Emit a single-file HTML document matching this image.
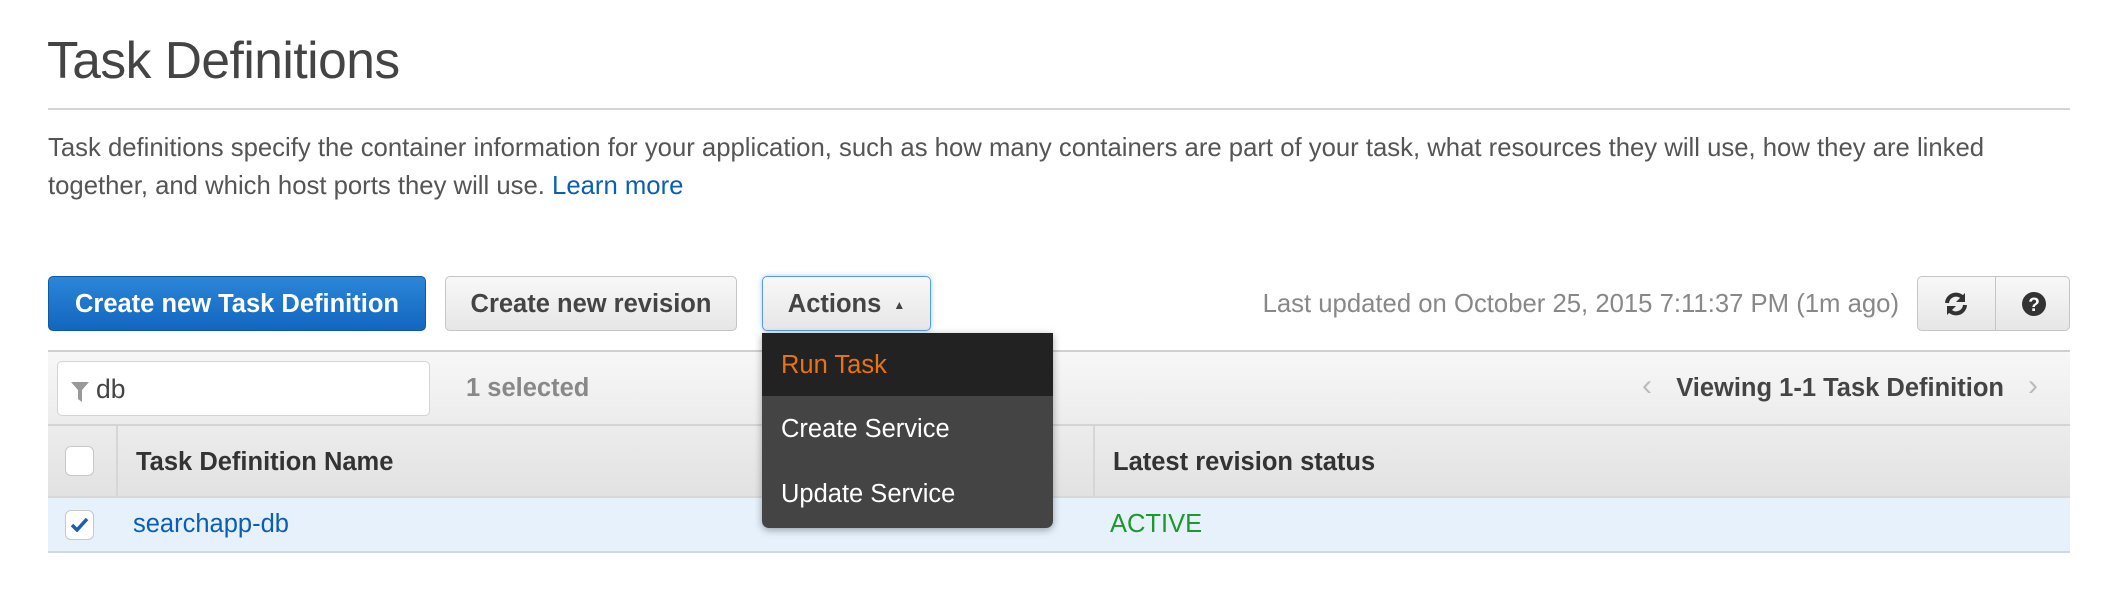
<!DOCTYPE html>
<html><head><meta charset="utf-8"><style>
*{box-sizing:border-box;margin:0;padding:0}
body{width:2112px;height:596px;background:#fff;font-family:"Liberation Sans",Arial,sans-serif;position:relative;overflow:hidden;color:#444}
.a{position:absolute;white-space:nowrap}
h1{position:absolute;left:47px;top:30px;font-size:51.5px;font-weight:normal;color:#444;letter-spacing:-0.5px}
.hr{position:absolute;left:48px;top:108px;width:2022px;height:2px;background:#d5d5d5}
.p{position:absolute;left:48px;top:129px;width:2060px;font-size:25.7px;line-height:38px;color:#555}
.p a{color:#0a5fb4;text-decoration:none}
.btn{position:absolute;top:276px;height:55px;border-radius:5px;font-weight:bold;font-size:25.5px;display:flex;align-items:center;justify-content:center;padding-top:2px}
.b1{left:48px;width:378px;background:linear-gradient(#2b86d8,#1266bf);border:1px solid #0e5aa8;color:#fff}
.b2{left:445px;width:292px;background:linear-gradient(#f8f8f8,#e6e6e6);border:1px solid #c5c5c5;color:#444}
.b3{left:762px;width:169px;background:linear-gradient(#f8f8f8,#e6e6e6);border:1px solid #5a9be0;color:#444;box-shadow:0 0 6px #a8cdf3}
.grp{position:absolute;left:1917px;top:276px;width:153px;height:55px;border:1px solid #c5c5c5;border-radius:5px;background:linear-gradient(#f8f8f8,#e6e6e6)}
.grp .d{position:absolute;left:77px;top:0;width:1px;height:53px;background:#c5c5c5}
.panel{position:absolute;left:48px;top:350px;width:2022px;height:201px;border-top:2px solid #d0d0d0}
.bar{position:absolute;left:0;top:0;width:100%;height:74px;background:linear-gradient(#f7f7f7,#ececec);border-bottom:2px solid #d4d4d4}
.inp{position:absolute;left:9px;top:9px;width:373px;height:55px;background:#fff;border:1px solid #d4d4d4;border-radius:5px}
.hd{position:absolute;left:0;top:74px;width:100%;height:72px;background:linear-gradient(#ececec,#e2e2e2);border-bottom:2px solid #d8d8d8}
.row{position:absolute;left:0;top:146px;width:100%;height:55px;background:#e6f1fc;border-bottom:2px solid #cfd9e2}
.cb{position:absolute;width:29px;height:30px;border:1px solid #c8c8c8;border-radius:6px;background:#fff}
.menu{position:absolute;left:762px;top:333px;width:291px;height:195px;background:#444;border-radius:0 0 7px 7px;box-shadow:0 2px 8px rgba(0,0,0,.35);overflow:hidden}
.menu div{position:absolute;left:19px;font-size:25.5px;color:#fff}
</style></head><body>
<h1>Task Definitions</h1>
<div class="hr"></div>
<div class="p">Task definitions specify the container information for your application, such as how many containers are part of your task, what resources they will use, how they are linked<br>together, and which host ports they will use. <a>Learn more</a></div>

<div class="btn b1">Create new Task Definition</div>
<div class="btn b2">Create new revision</div>
<div class="btn b3">Actions <span style="font-size:12px;margin-left:12px">&#9650;</span></div>
<div class="a" style="right:213px;top:290px;font-size:25.7px;color:#888">Last updated on October 25, 2015 7:11:37 PM (1m ago)</div>
<div class="grp"><div class="d"></div>
<svg class="a" style="left:25px;top:14px" width="26" height="26" viewBox="0 0 26 26"><path d="M4 12a9 9 0 0 1 16-5" fill="none" stroke="#333" stroke-width="4"/><path d="M22 2v9h-9z" fill="#333"/><path d="M22 14a9 9 0 0 1-16 5" fill="none" stroke="#333" stroke-width="4"/><path d="M4 24v-9h9z" fill="#333"/></svg>
<svg class="a" style="left:103px;top:14px" width="26" height="26" viewBox="0 0 26 26"><circle cx="13" cy="13" r="12" fill="#333"/><text x="13" y="20" font-size="19" font-weight="bold" fill="#fff" text-anchor="middle" font-family="Liberation Sans">?</text></svg>
</div>

<div class="panel">
<div class="bar">
<div class="inp"><svg class="a" style="left:13px;top:20px" width="18" height="20" viewBox="0 0 18 20"><path d="M0 0h18l-7 8v12l-4-3v-9z" fill="#999"/></svg><div class="a" style="left:38px;top:12px;font-size:26.5px;color:#444">db</div></div>
<div class="a" style="left:418px;top:22px;font-size:25.5px;font-weight:bold;color:#888">1 selected</div>
<div class="a" style="left:1594px;top:17px;font-size:30px;color:#bbb">&#8249;</div>
<div class="a" style="right:66px;top:22px;font-size:25.5px;font-weight:bold;color:#444">Viewing 1-1 Task Definition</div>
<div class="a" style="left:1980px;top:17px;font-size:30px;color:#bbb">&#8250;</div>
</div>
<div class="hd">
<div class="cb" style="left:17px;top:20px"></div>
<div class="a" style="left:68px;top:0;width:2px;height:72px;background:#d6d6d6"></div>
<div class="a" style="left:88px;top:22px;font-size:25.5px;font-weight:bold;color:#333">Task Definition Name</div>
<div class="a" style="left:1045px;top:0;width:2px;height:72px;background:#d6d6d6"></div>
<div class="a" style="left:1065px;top:22px;font-size:25.5px;font-weight:bold;color:#333">Latest revision status</div>
</div>
<div class="row">
<div class="cb" style="left:17px;top:12px"><svg class="a" style="left:5px;top:7px" width="18" height="14" viewBox="0 0 18 14"><path d="M1 7l5 5 10-11" fill="none" stroke="#1a5fb4" stroke-width="3.5"/></svg></div>
<div class="a" style="left:85px;top:12px;font-size:25.5px;color:#0a5fb4">searchapp-db</div>
<div class="a" style="left:1062px;top:12px;font-size:25.5px;color:#1a9a2a">ACTIVE</div>
</div>
</div>

<div class="menu">
<div style="left:0;top:0;width:291px;height:63px;background:#222"></div>
<div style="top:18px;color:#ec7211">Run Task</div>
<div style="top:82px">Create Service</div>
<div style="top:147px">Update Service</div>
</div>
</body></html>
